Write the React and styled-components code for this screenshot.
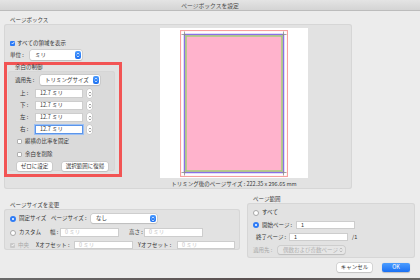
import React from "react";
import styled, { createGlobalStyle } from "styled-components";

const GlobalStyle = createGlobalStyle`
  html, body {
    margin: 0;
    padding: 0;
    background: #ececec;
  }
  body {
    font-family: "Noto Sans CJK JP", "Noto Sans", sans-serif;
    color: #333;
  }
`;

const StyledWindow = styled.div`
  width: 420px;
  height: 280px;
  overflow: hidden;
  background: #ececec;
  display: flex;
  flex-direction: column;
  font-size: 5.5px;
  line-height: 7px;
`;

const StyledTitleBar = styled.div`
  height: 10px;
  background: linear-gradient(#e4e4e4, #d4d4d4);
  border-bottom: 1px solid #bcbcbc;
  display: flex;
  justify-content: center;
  align-items: center;
  color: #4a4a4a;
  font-size: 5.8px;
`;

const StyledContent = styled.div`
  padding: 0 4px;
  display: flex;
  flex-direction: column;
`;

const StyledSectionLabel = styled.div`
  height: 7px;
  padding-left: 6px;
  margin-top: ${(p) => p.$top || 0}px;
  color: #3a3a3a;
`;

const StyledGroup = styled.div`
  box-sizing: border-box;
  width: ${(p) => p.$w}px;
  height: ${(p) => p.$h}px;
  background: ${(p) => p.$bg || "#e2e2e2"};
  box-shadow: inset 0 0 0 1px #d6d6d6;
  border-radius: 3px;
  display: flex;
  flex-direction: ${(p) => p.$dir || "column"};
  padding-left: ${(p) => p.$pl || 0}px;
  padding-top: ${(p) => p.$pt || 0}px;
`;

const StyledLeftColumn = styled.div`
  width: 118px;
  padding-top: 15px;
  display: flex;
  flex-direction: column;
`;

const StyledRow = styled.div`
  display: flex;
  align-items: center;
  height: ${(p) => p.$h || 9}px;
  margin-top: ${(p) => p.$top || 0}px;
  padding-left: ${(p) => p.$pl || 0}px;
  gap: ${(p) => p.$gap || 0}px;
  color: ${(p) => (p.$disabled ? "#a8a8a8" : "#333")};
`;

const StyledCell = styled.div`
  width: ${(p) => p.$w}px;
  flex: none;
  margin-left: ${(p) => p.$ml || 0}px;
  display: flex;
  align-items: center;
  gap: 3px;
  white-space: nowrap;
  color: ${(p) => (p.$disabled ? "#a8a8a8" : "inherit")};
`;

const StyledCheckbox = styled.div`
  width: 5px;
  height: 5px;
  flex: none;
  border-radius: 1px;
  box-sizing: border-box;
  background: ${(p) => (p.$checked ? (p.$disabled ? "#c9c9c9" : "#2f7cf6") : "#fff")};
  border: ${(p) => (p.$checked ? "none" : "1px solid #b0b0b0")};
  display: flex;
  align-items: center;
  justify-content: center;
`;

const StyledRadio = styled.div`
  width: 6px;
  height: 6px;
  flex: none;
  border-radius: 50%;
  box-sizing: border-box;
  background: ${(p) => (p.$on ? "#2f7cf6" : "#fff")};
  border: ${(p) => (p.$on ? "none" : "1px solid #a8a8a8")};
  display: flex;
  align-items: center;
  justify-content: center;
  &::after {
    content: "";
    display: ${(p) => (p.$on ? "block" : "none")};
    width: 2px;
    height: 2px;
    border-radius: 50%;
    background: #fff;
  }
`;

const StyledPopup = styled.div`
  box-sizing: border-box;
  width: ${(p) => p.$w}px;
  height: ${(p) => p.$h || 10}px;
  flex: none;
  background: ${(p) => (p.$disabled ? "#e6e6e6" : "#fff")};
  border-radius: 2px;
  box-shadow: 0 0 0 0.5px #bdbdbd, 0 0.5px 1px rgba(0, 0, 0, 0.15);
  display: flex;
  align-items: center;
  justify-content: space-between;
  padding-left: 5px;
  padding-right: 1px;
  color: ${(p) => (p.$disabled ? "#b0b0b0" : "#333")};
`;

const StyledPopupArrows = styled.div`
  width: 6px;
  height: ${(p) => p.$h || 8}px;
  border-radius: 2px;
  background: ${(p) => (p.$disabled ? "transparent" : "linear-gradient(#4b9bff, #1c6ff0)")};
  display: flex;
  align-items: center;
  justify-content: center;
`;

const StyledInput = styled.div`
  box-sizing: border-box;
  width: ${(p) => p.$w}px;
  height: ${(p) => p.$h || 9}px;
  flex: none;
  margin-left: ${(p) => p.$ml || 0}px;
  background: ${(p) => (p.$disabled ? "#f2f2f2" : "#fff")};
  border: 1px solid ${(p) => (p.$focus ? "#5b95ea" : "#cdcdcd")};
  box-shadow: ${(p) => (p.$focus ? "0 0 0 1px #9cc0f4" : "none")};
  padding-left: 4px;
  display: flex;
  align-items: center;
  color: ${(p) => (p.$placeholder ? "#c4c4c4" : "#333")};
`;

const StyledStepper = styled.div`
  width: 5px;
  height: 9px;
  flex: none;
  margin-left: 4px;
  border-radius: 3px;
  background: #fff;
  box-shadow: 0 0 0 0.5px #c2c2c2;
  display: flex;
  align-items: center;
  justify-content: center;
`;

const StyledRedBox = styled.div`
  box-sizing: border-box;
  width: 118px;
  height: 115px;
  margin-top: 2px;
  border: 3px solid #f25454;
  display: flex;
  flex-direction: column;
`;

const StyledSmallLabel = styled.div`
  height: 7px;
  margin-top: -1px;
  padding-left: 8px;
  color: #3a3a3a;
`;

const StyledFieldLabel = styled.div`
  width: ${(p) => p.$w}px;
  flex: none;
  padding-left: ${(p) => p.$pl || 0}px;
  box-sizing: border-box;
  white-space: nowrap;
`;

const StyledPushButton = styled.div`
  box-sizing: border-box;
  width: ${(p) => p.$w}px;
  height: 9px;
  flex: none;
  border-radius: 2px;
  background: ${(p) => (p.$primary ? "linear-gradient(#4c9dff, #1a70f3)" : "#fff")};
  color: ${(p) => (p.$primary ? "#fff" : "#333")};
  box-shadow: ${(p) =>
    p.$primary ? "0 0.5px 1px rgba(0,0,0,0.2)" : "0 0 0 0.5px #c0c0c0, 0 0.5px 1px rgba(0,0,0,0.15)"};
  display: flex;
  align-items: center;
  justify-content: center;
  white-space: nowrap;
`;

const StyledPreviewColumn = styled.div`
  width: 148px;
  margin-left: 38px;
  display: flex;
  flex-direction: column;
`;

const StyledPreview = styled.div`
  margin-top: 4px;
  height: 150px;
  background: #fff;
  display: flex;
  align-items: center;
  justify-content: center;
`;

const StyledCaption = styled.div`
  margin-top: 3px;
  text-align: center;
  white-space: nowrap;
  color: #3a3a3a;
`;

const StyledBottomRow = styled.div`
  display: flex;
  align-items: flex-start;
  margin-top: 7px;
`;

const StyledColumn = styled.div`
  display: flex;
  flex-direction: column;
  width: ${(p) => p.$w}px;
  margin-left: ${(p) => p.$ml || 0}px;
  margin-top: ${(p) => p.$top || 0}px;
`;

const StyledButtonBar = styled.div`
  display: flex;
  justify-content: flex-end;
  gap: 10px;
  padding-right: 5px;
  margin-top: 5px;
`;

const StyledSpacer = styled.div`
  flex: 1;
`;

const StyledBottomStrip = styled.div`
  height: 2px;
  background: linear-gradient(90deg, #6a6a6a, #5a5050 60%, #6a6a6a);
`;

const Check = () => (
  <svg width="4" height="4" viewBox="0 0 4 4">
    <path d="M0.7 2 L1.6 3 L3.3 0.9" stroke="#fff" strokeWidth="0.8" fill="none" />
  </svg>
);

const Chevrons = ({ color = "#fff" }) => (
  <svg width="4" height="6" viewBox="0 0 4 6">
    <path d="M0.8 2.3 L2 1 L3.2 2.3 M0.8 3.7 L2 5 L3.2 3.7" stroke={color} strokeWidth="0.7" fill="none" />
  </svg>
);

const CheckBox = ({ checked, disabled }) => (
  <StyledCheckbox $checked={checked} $disabled={disabled}>
    {checked && <Check />}
  </StyledCheckbox>
);

const Popup = ({ w, h, children, disabled }) => (
  <StyledPopup $w={w} $h={h} $disabled={disabled}>
    <span>{children}</span>
    <StyledPopupArrows $h={h ? h - 2 : 8} $disabled={disabled}>
      <Chevrons color={disabled ? "#aaa" : "#fff"} />
    </StyledPopupArrows>
  </StyledPopup>
);

const PageDrawing = () => (
  <svg width="108" height="147" viewBox="0 0 108 147">
    <rect x="0.5" y="0.5" width="107" height="146" fill="none" stroke="#f7a0a0" strokeWidth="1.2" />
    <rect x="4.5" y="4.5" width="99" height="138" fill="#ffb3cc" stroke="#8a6fe8" strokeWidth="1.5" />
    <rect x="6" y="6" width="96" height="135" fill="#ffb3cc" stroke="#93d46c" strokeWidth="1.3" />
    <g stroke="#8c8c8c" strokeWidth="0.8">
      <path d="M1.5 4.5 H6 M4.5 1.5 V6" />
      <path d="M102 4.5 H106.5 M103.5 1.5 V6" />
      <path d="M1.5 142.5 H6 M4.5 141 V145.5" />
      <path d="M102 142.5 H106.5 M103.5 141 V145.5" />
    </g>
  </svg>
);

const MarginField = ({ label, value, focus }) => (
  <StyledRow $h={9}>
    <StyledFieldLabel $w={27} $pl={12}>{label}</StyledFieldLabel>
    <StyledInput $w={48} $focus={focus}>{value}</StyledInput>
    <StyledStepper>
      <Chevrons color="#777" />
    </StyledStepper>
  </StyledRow>
);

const App = () => {
  return (
    <StyledWindow>
      <GlobalStyle />
      <StyledTitleBar>ページボックスを設定</StyledTitleBar>

      <StyledContent>
        <StyledSectionLabel $top={6}>ページボックス</StyledSectionLabel>
        <StyledGroup $w={348} $h={165} $dir="row">
          <StyledLeftColumn>
            <StyledRow $h={8} $pl={6} $gap={2}>
              <CheckBox checked />
              すべての領域を表示
            </StyledRow>
            <StyledRow $h={10} $top={3} $pl={6}>
              <StyledFieldLabel $w={20}>単位 :</StyledFieldLabel>
              <Popup w={52}>ミリ</Popup>
            </StyledRow>

            <StyledRedBox>
              <StyledSmallLabel>余白の制御</StyledSmallLabel>
              <StyledGroup $w={107} $h={100} $bg="#dadada" $pt={4} style={{ marginLeft: 1 }}>
                <StyledRow $h={10} $pl={7}>
                  <StyledFieldLabel $w={25}>適用先 :</StyledFieldLabel>
                  <Popup w={60}>トリミングサイズ</Popup>
                </StyledRow>
                <StyledColumn style={{ gap: 3, marginTop: 4 }}>
                  <MarginField label="上 :" value="12.7 ミリ" />
                  <MarginField label="下 :" value="12.7 ミリ" />
                  <MarginField label="左 :" value="12.7 ミリ" />
                  <MarginField label="右 :" value="12.7 ミリ" focus />
                </StyledColumn>
                <StyledRow $h={7} $top={4} $pl={9} $gap={3}>
                  <CheckBox />
                  縦横の比率を固定
                </StyledRow>
                <StyledRow $h={7} $top={6} $pl={9} $gap={3}>
                  <CheckBox />
                  余白を削除
                </StyledRow>
                <StyledRow $h={9} $top={4} $pl={9} $gap={10}>
                  <StyledPushButton $w={35}>ゼロに設定</StyledPushButton>
                  <StyledPushButton $w={46}>選択範囲に復帰</StyledPushButton>
                </StyledRow>
              </StyledGroup>
            </StyledRedBox>
          </StyledLeftColumn>

          <StyledPreviewColumn>
            <StyledPreview>
              <PageDrawing />
            </StyledPreview>
            <StyledCaption>トリミング後のページサイズ : 222.35 x 296.65 mm</StyledCaption>
          </StyledPreviewColumn>
        </StyledGroup>

        <StyledBottomRow>
          <StyledColumn $w={236} $top={6}>
            <StyledSectionLabel>ページサイズを変更</StyledSectionLabel>
            <StyledGroup $w={236} $h={41} $pl={6} $pt={5}>
              <StyledRow $h={9}>
                <StyledCell $w={41}>
                  <StyledRadio $on />
                  固定サイズ
                </StyledCell>
                <StyledCell $w={40}>ページサイズ :</StyledCell>
                <Popup w={66} h={9}>なし</Popup>
              </StyledRow>
              <StyledRow $h={9} $top={5}>
                <StyledCell $w={40}>
                  <StyledRadio />
                  カスタム
                </StyledCell>
                <StyledCell $w={10}>幅 :</StyledCell>
                <StyledInput $w={59} $placeholder>0 ミリ</StyledInput>
                <StyledCell $w={15} $ml={10}>高さ :</StyledCell>
                <StyledInput $w={59} $placeholder>0 ミリ</StyledInput>
              </StyledRow>
              <StyledRow $h={8} $top={4}>
                <StyledCell $w={26} $disabled>
                  <CheckBox checked disabled />
                  中央
                </StyledCell>
                <StyledCell $w={38}>Xオフセット :</StyledCell>
                <StyledInput $w={59} $h={8} $placeholder>0 ミリ</StyledInput>
                <StyledCell $w={39} $ml={5}>Yオフセット :</StyledCell>
                <StyledInput $w={58} $h={8} $placeholder>0 ミリ</StyledInput>
              </StyledRow>
            </StyledGroup>
          </StyledColumn>

          <StyledColumn $w={168} $ml={7}>
            <StyledSectionLabel>ページ範囲</StyledSectionLabel>
            <StyledGroup $w={168} $h={55} $pl={6} $pt={6}>
              <StyledRow $h={7} $gap={3}>
                <StyledRadio />
                すべて
              </StyledRow>
              <StyledRow $h={8} $top={5}>
                <StyledCell $w={43}>
                  <StyledRadio $on />
                  開始ページ :
                </StyledCell>
                <StyledInput $w={59} $h={8}>1</StyledInput>
              </StyledRow>
              <StyledRow $h={8} $top={4} $pl={3}>
                <StyledCell $w={33}>終了ページ :</StyledCell>
                <StyledInput $w={59} $h={8}>1</StyledInput>
                <StyledCell $w={10} $ml={4}>/1</StyledCell>
              </StyledRow>
              <StyledRow $h={8} $top={5} $disabled>
                <StyledCell $w={25}>適用先 :</StyledCell>
                <Popup w={67} h={8} disabled>偶数および奇数ページ</Popup>
              </StyledRow>
            </StyledGroup>
            <StyledButtonBar>
              <StyledPushButton $w={35}>キャンセル</StyledPushButton>
              <StyledPushButton $w={28} $primary>OK</StyledPushButton>
            </StyledButtonBar>
          </StyledColumn>
        </StyledBottomRow>
      </StyledContent>

      <StyledSpacer />
      <StyledBottomStrip />
    </StyledWindow>
  );
};

export default App;
